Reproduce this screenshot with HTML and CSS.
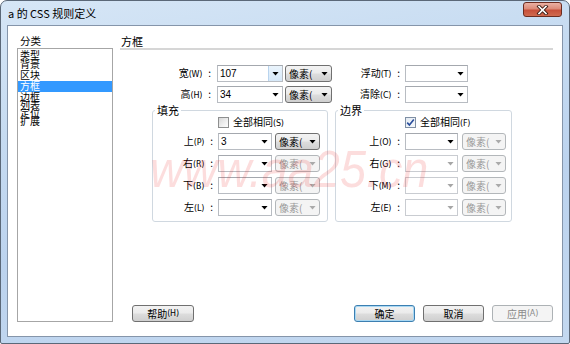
FILE: index.html
```html
<!DOCTYPE html>
<html lang="zh-CN">
<head>
<meta charset="utf-8">
<title>a 的 CSS 规则定义</title>
<link rel="stylesheet" href="styles.css">
</head>
<body>
<div class="win">
  <div class="titlebar">
    <span class="title">a 的 CSS 规则定义</span>
    <span class="close">
      <svg width="13" height="10" viewBox="0 0 13 10">
        <path d="M3 1.5 L10 8.5 M10 1.5 L3 8.5" stroke="#3a1a12" stroke-width="3.4" stroke-linecap="square"/>
        <path d="M3 1.5 L10 8.5 M10 1.5 L3 8.5" stroke="#ffffff" stroke-width="1.7" stroke-linecap="square"/>
      </svg>
    </span>
  </div>
  <div class="client">
    <div class="main">
      <div class="cat">
        <div class="cat-label">分类</div>
        <ul class="list">
          <li class="h9">类型</li>
          <li class="h11">背景</li>
          <li class="h11">区块</li>
          <li class="h11 sel">方框</li>
          <li class="h8">边框</li>
          <li class="h8">列表</li>
          <li class="h8">定位</li>
          <li class="h10">扩展</li>
        </ul>
      </div>
      <div class="panel">
        <div class="heading">方框</div>
        <div class="toprows">
          <div class="row">
            <span class="lbl lbl-a">宽<span class="key">(W)</span><span class="colon">:</span></span>
            <div class="combo combo-a"><span class="val">107</span><span class="abox hot"><span class="arr"></span></span></div>
            <div class="unit"><span class="utext">像素(</span><span class="abox"><span class="arr"></span></span></div>
            <span class="lbl lbl-b">浮动<span class="key">(T)</span><span class="colon">:</span></span>
            <div class="combo combo-b"><span class="val"></span><span class="abox"><span class="arr"></span></span></div>
          </div>
          <div class="row">
            <span class="lbl lbl-a">高<span class="key">(H)</span><span class="colon">:</span></span>
            <div class="combo combo-a"><span class="val">34</span><span class="abox"><span class="arr"></span></span></div>
            <div class="unit"><span class="utext">像素(</span><span class="abox"><span class="arr"></span></span></div>
            <span class="lbl lbl-b">清除<span class="key">(C)</span><span class="colon">:</span></span>
            <div class="combo combo-b"><span class="val"></span><span class="abox"><span class="arr"></span></span></div>
          </div>
        </div>
        <div class="groups">
          <fieldset class="grp grp-pad">
            <legend>填充</legend>
            <div class="grid">
              <div class="check"><span class="cb"></span><span>全部相同<span class="key">(S)</span></span></div>
              <span class="lbl">上<span class="key">(P)</span><span class="colon">:</span></span>
              <div class="combo"><span class="val">3</span><span class="abox"><span class="arr"></span></span></div>
              <div class="unit"><span class="utext">像素(</span><span class="abox"><span class="arr"></span></span></div>
              <span class="lbl">右<span class="key">(R)</span><span class="colon">:</span></span>
              <div class="combo"><span class="val"></span><span class="abox"><span class="arr"></span></span></div>
              <div class="unit dis"><span class="utext">像素(</span><span class="abox"><span class="arr"></span></span></div>
              <span class="lbl">下<span class="key">(B)</span><span class="colon">:</span></span>
              <div class="combo"><span class="val"></span><span class="abox"><span class="arr"></span></span></div>
              <div class="unit dis"><span class="utext">像素(</span><span class="abox"><span class="arr"></span></span></div>
              <span class="lbl">左<span class="key">(L)</span><span class="colon">:</span></span>
              <div class="combo"><span class="val"></span><span class="abox"><span class="arr"></span></span></div>
              <div class="unit dis"><span class="utext">像素(</span><span class="abox"><span class="arr"></span></span></div>
            </div>
          </fieldset>
          <fieldset class="grp grp-mar">
            <legend>边界</legend>
            <div class="grid">
              <div class="check"><span class="cb on"><svg width="9" height="9" viewBox="0 0 9 9"><path d="M1.2 4.6 L3.4 7 L7.8 1.4" fill="none" stroke="#2a4e9c" stroke-width="1.6"/></svg></span><span>全部相同<span class="key">(F)</span></span></div>
              <span class="lbl">上<span class="key">(O)</span><span class="colon">:</span></span>
              <div class="combo"><span class="val"></span><span class="abox"><span class="arr"></span></span></div>
              <div class="unit dis"><span class="utext">像素(</span><span class="abox"><span class="arr"></span></span></div>
              <span class="lbl">右<span class="key">(G)</span><span class="colon">:</span></span>
              <div class="combo dis"><span class="val"></span><span class="abox"><span class="arr"></span></span></div>
              <div class="unit dis"><span class="utext">像素(</span><span class="abox"><span class="arr"></span></span></div>
              <span class="lbl">下<span class="key">(M)</span><span class="colon">:</span></span>
              <div class="combo dis"><span class="val"></span><span class="abox"><span class="arr"></span></span></div>
              <div class="unit dis"><span class="utext">像素(</span><span class="abox"><span class="arr"></span></span></div>
              <span class="lbl">左<span class="key">(E)</span><span class="colon">:</span></span>
              <div class="combo dis"><span class="val"></span><span class="abox"><span class="arr"></span></span></div>
              <div class="unit dis"><span class="utext">像素(</span><span class="abox"><span class="arr"></span></span></div>
            </div>
          </fieldset>
        </div>
        <div class="buttons">
          <span class="btn btn-help">帮助<span class="key">(H)</span></span>
          <span class="btn def">确定</span>
          <span class="btn">取消</span>
          <span class="btn dis">应用 <span class="key">(A)</span></span>
        </div>
      </div>
    </div>
    <div class="watermark">www.aa25.cn</div>
  </div>
</div>
</body>
</html>
```
FILE: styles.css
```css
html, body {
  margin: 0;
  padding: 0;
  background: #ffffff;
}
body {
  font-family: "Noto Sans CJK SC", "Liberation Sans", sans-serif;
  font-size: 10px;
  color: #000;
}
.win {
  width: 570px;
  height: 344px;
  box-sizing: border-box;
  border: 1px solid #5b6878;
  border-radius: 7px 7px 2px 2px;
  background: linear-gradient(170deg, #d6e6f6 0%, #c6dbf1 30%, #bcd3ee 60%, #c3d8f0 100%);
  display: flex;
  flex-direction: column;
  overflow: hidden;
}
.titlebar {
  height: 24px;
  flex: none;
  display: flex;
  align-items: flex-start;
  padding: 0 7px;
}
.title {
  margin-top: 5px;
  line-height: 14px;
  font-size: 11px;
  color: #000;
  white-space: nowrap;
}
.close {
  margin-left: auto;
  margin-top: 1px;
  width: 39px;
  height: 15px;
  box-sizing: border-box;
  border: 1px solid #6b2c20;
  border-radius: 3px;
  background: linear-gradient(180deg, #eab0a3 0%, #dc8a78 45%, #c7503a 55%, #d06a4f 100%);
  display: flex;
  align-items: center;
  justify-content: center;
}
.close svg { display: block; }
.client {
  margin: 0 6px;
  height: 312px;
  flex: none;
  box-sizing: border-box;
  border: 1px solid #8595aa;
  background: #ffffff;
  position: relative;
  padding: 8px 9px 0 9px;
}
.main {
  display: flex;
  gap: 7px;
  height: 288px;
}
.cat {
  width: 96px;
  display: flex;
  flex-direction: column;
}
.cat-label {
  height: 14px;
  line-height: 14px;
  font-size: 10.5px;
  padding-left: 3px;
}
.list {
  list-style: none;
  margin: 0;
  padding: 1px 0 0 0;
  flex: 1;
  border: 1px solid #a6a6a6;
  overflow: hidden;
}
.list li {
  line-height: 10px;
  font-size: 10px;
  padding-left: 2px;
  white-space: nowrap;
}
.list .h8 { height: 8px; }
.list .h9 { height: 9px; }
.list .h10 { height: 10px; }
.list .h11 { height: 11px; }
.list .sel {
  background: #3399ff;
  color: #ffffff;
}
.panel {
  flex: 1;
  display: flex;
  flex-direction: column;
}
.heading {
  height: 14px;
  line-height: 14px;
  font-size: 11px;
  padding-left: 1px;
  border-bottom: 2px solid #d6d6d6;
}
.toprows {
  margin-top: 15px;
  display: flex;
  flex-direction: column;
  gap: 4px;
}
.row {
  display: flex;
  align-items: center;
  height: 17px;
}
.lbl {
  text-align: right;
  white-space: nowrap;
  font-size: 10px;
  line-height: 17px;
}
.key {
  font-family: "DejaVu Sans", sans-serif;
  font-size: 8px;
  letter-spacing: -0.2px;
}
.colon {
  margin-left: 6px;
  margin-right: 2px;
}
.lbl-a { width: 93px; margin-right: 4px; }
.lbl-b { width: 70px; margin-right: 3px; }
.combo {
  height: 17px;
  box-sizing: border-box;
  border: 1px solid #b8bcc2;
  border-top-color: #a4a8ae;
  background: #ffffff;
  display: flex;
  align-items: stretch;
}
.combo-a { width: 66px; margin-right: 2px; }
.combo-b { width: 63px; }
.val {
  flex: 1;
  padding-left: 2px;
  font-family: "Liberation Sans", sans-serif;
  font-size: 10px;
  line-height: 15px;
}
.abox {
  width: 13px;
  flex: none;
  display: flex;
  align-items: center;
  justify-content: center;
}
.abox.hot {
  background: linear-gradient(180deg, #eaf4fc, #d6e8f8);
  border-left: 1px solid #b9d4ee;
}
.arr {
  width: 7px;
  height: 4px;
  background: #000;
  clip-path: polygon(0 0, 100% 0, 50% 100%);
}
.combo.dis {
  border-color: #c9ccd1;
}
.combo.dis .arr { background: #a6a6a6; }
.unit {
  width: 47px;
  height: 17px;
  box-sizing: border-box;
  border: 1px solid #707070;
  border-radius: 3px;
  background: linear-gradient(180deg, #f3f3f3 0%, #ebebeb 48%, #dddddd 52%, #cfcfcf 100%);
  display: flex;
  align-items: stretch;
  padding-left: 3px;
}
.utext {
  flex: 1;
  line-height: 15px;
  font-size: 10px;
  white-space: nowrap;
  overflow: hidden;
}
.unit.dis {
  border-color: #b3b7ba;
  background: #f4f4f4;
  color: #9a9a9a;
}
.unit.dis .arr { background: #aaaaaa; }
.groups {
  display: flex;
  gap: 7px;
  margin-left: 32px;
}
.grp {
  margin: 0;
  padding: 0 0 5px 0;
  border: 1px solid #d0d8e0;
  border-radius: 3px;
  min-inline-size: 0;
}
.grp legend {
  margin-left: 2px;
  padding: 0 2px;
  font-size: 11px;
  line-height: 14px;
}
.grp-pad { width: 176px; box-sizing: border-box; padding-right: 7px; }
.grp-mar { width: 177px; box-sizing: border-box; padding-right: 4px; }
.grid {
  display: grid;
  row-gap: 5px;
  grid-auto-rows: 17px;
  grid-template-rows: 11px;
  align-items: center;
}
.grp-pad .grid { grid-template-columns: 62px 54px 45px; column-gap: 3px; }
.grp-mar .grid { grid-template-columns: 66px 53px 45px; column-gap: 3px; }
.grp-mar .grid .unit { margin-left: 1px; }
.grid .combo, .grid .unit { width: auto; }
.check {
  grid-column: 2 / span 2;
  display: flex;
  align-items: center;
  gap: 4px;
  height: 11px;
  white-space: nowrap;
  font-size: 10px;
  line-height: 11px;
}
.cb {
  width: 11px;
  height: 11px;
  box-sizing: border-box;
  border: 1px solid #8e8f8f;
  background: linear-gradient(135deg, #d8d8d8 0%, #f0f0f0 60%, #fdfdfd 100%);
  display: flex;
  align-items: center;
  justify-content: center;
  flex: none;
}
.cb.on {
  background: linear-gradient(135deg, #e4ebf3 0%, #f6f9fc 100%);
  border-color: #7f8fa4;
}
.cb svg { display: block; }
.buttons {
  margin-top: auto;
  display: flex;
  gap: 8px;
  padding-left: 12px;
}
.btn {
  width: 61px;
  height: 17px;
  box-sizing: border-box;
  border: 1px solid #707070;
  border-radius: 3px;
  background: linear-gradient(180deg, #f2f2f2 0%, #ebebeb 48%, #dddddd 52%, #cfcfcf 100%);
  display: flex;
  align-items: center;
  justify-content: center;
  font-size: 10px;
  line-height: 15px;
  white-space: nowrap;
}
.btn-help { width: 62px; margin-right: auto; }
.btn.def {
  border-color: #3c7fb1;
  box-shadow: inset 0 0 0 1px #a9d8f3;
}
.btn.dis {
  border-color: #adb2b5;
  background: #f4f4f4;
  color: #8a8a8a;
}
.watermark {
  position: absolute;
  left: 142px;
  top: 117px;
  font-family: "Liberation Sans", sans-serif;
  font-style: italic;
  font-size: 52px;
  line-height: 52px;
  color: rgba(235, 30, 30, 0.15);
  white-space: nowrap;
  transform: scaleX(0.9);
  transform-origin: 0 0;
  pointer-events: none;
}
```
